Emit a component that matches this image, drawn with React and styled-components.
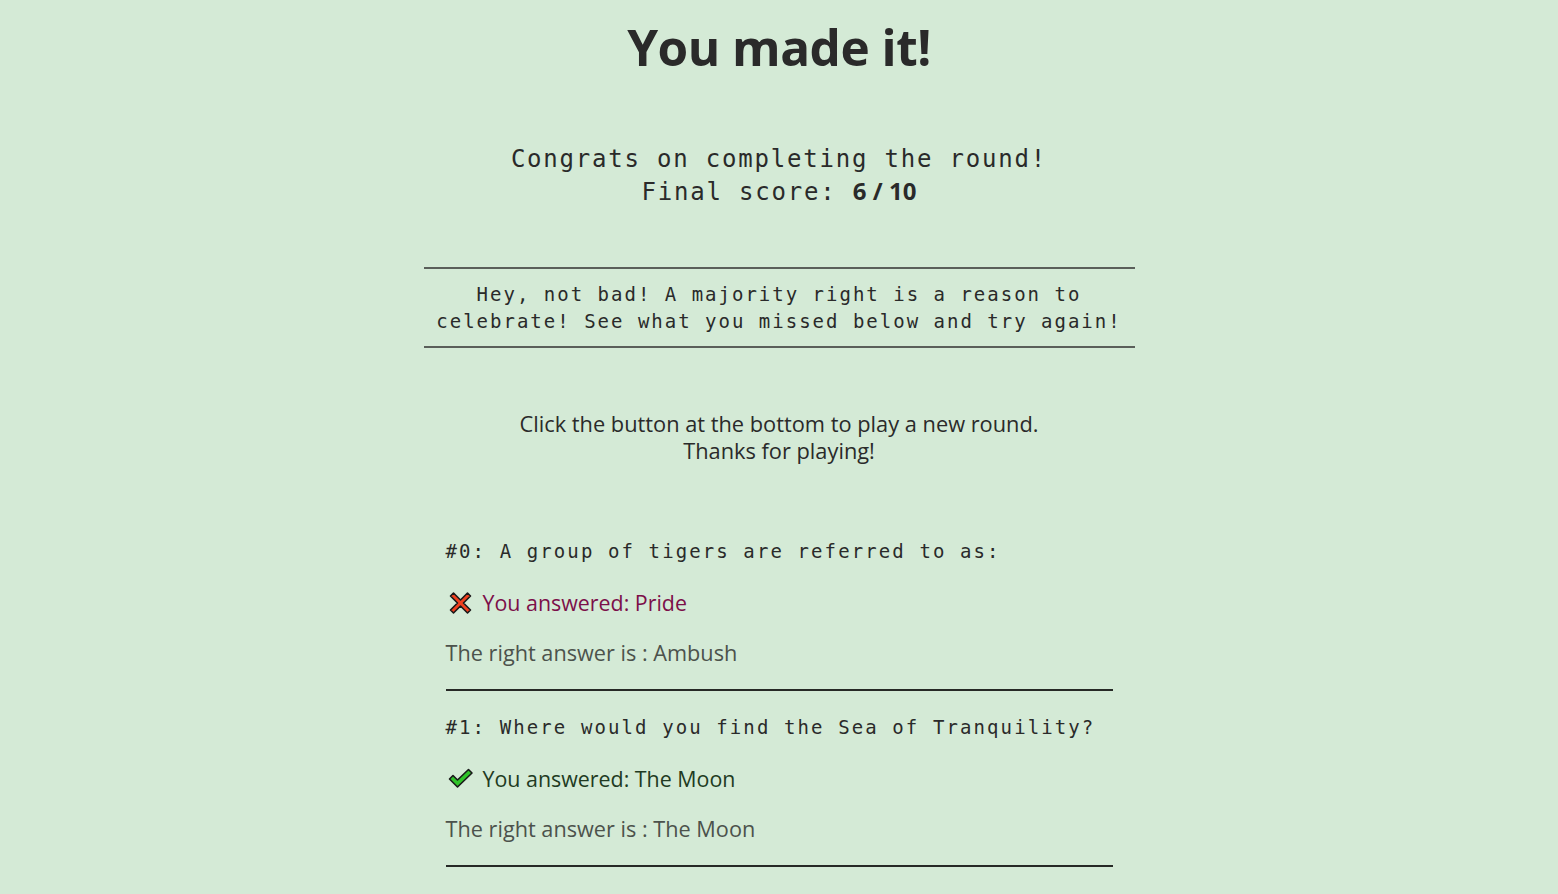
import styled, { createGlobalStyle } from 'styled-components';

const GlobalStyle = createGlobalStyle`
  body {
    margin: 0;
    background: #d4ead6;
    color: #2a2a2a;
    font-family: 'Open Sans', sans-serif;
  }
`;

const Page = styled.main`
  max-width: 711px;
  margin: 0 auto;
  padding-bottom: 40px;
  text-align: center;
`;

const Title = styled.h1`
  margin: 14px 0 0;
  font-size: 49.5px;
  line-height: 66px;
  font-weight: 700;
  letter-spacing: -0.5px;
`;

const Congrats = styled.p`
  margin: 63px 0 0;
  font-family: 'DejaVu Sans Mono', monospace;
  font-size: 24px;
  line-height: 32px;
  letter-spacing: 1.8px;

  strong {
    font-family: 'Open Sans', sans-serif;
    font-weight: 700;
    letter-spacing: 0;
  }
`;

const Message = styled.div`
  margin-top: 59px;
  padding: 12px 8px 11px;
  border-top: 2px solid #5a5f5a;
  border-bottom: 2px solid #5a5f5a;
  font-family: 'DejaVu Sans Mono', monospace;
  font-size: 19px;
  line-height: 27px;
  letter-spacing: 2px;
`;

const Info = styled.p`
  margin: 62px 0 0;
  font-size: 21.8px;
  line-height: 27px;
`;

const List = styled.ol`
  list-style: none;
  margin: 71px 22px 0;
  padding: 0;
  text-align: left;
`;

const Item = styled.li`
  padding: 20px 0;
  border-bottom: 2px solid #262926;

  &:first-child {
    padding-top: 0;
  }
`;

const Question = styled.h3`
  margin: 0;
  font-family: 'DejaVu Sans Mono', monospace;
  font-size: 19px;
  font-weight: 400;
  line-height: 32px;
  letter-spacing: 2.1px;
`;

const Answer = styled.p`
  display: flex;
  align-items: center;
  gap: 8px;
  margin: 20px 0 0;
  font-size: 21.4px;
  line-height: 32px;
  color: ${(p) => (p.$correct ? '#213a22' : '#7c0f49')};
`;

const RightAnswer = styled.p`
  margin: 18px 0 0;
  font-size: 21.7px;
  line-height: 32px;
  color: #4c524c;
`;

const CrossIcon = () => (
  <svg width="29" height="28" viewBox="0 0 28 28">
    <path
      d="M4 7 L7 4 L14 11 L21 4 L24 7 L17 14 L24 21 L21 24 L14 17 L7 24 L4 21 L11 14 Z"
      fill="#f0401f"
      stroke="#1a1a1a"
      strokeWidth="1.6"
      strokeLinejoin="round"
    />
  </svg>
);

const CheckIcon = () => (
  <svg width="29" height="28" viewBox="0 0 28 28">
    <path
      d="M3 14 L6.5 10.5 L11 15 L22 4.5 L25.5 8 L11 22 Z"
      fill="#2fc42a"
      stroke="#1a1a1a"
      strokeWidth="1.6"
      strokeLinejoin="round"
    />
  </svg>
);

const questions = [
  {
    q: 'A group of tigers are referred to as:',
    answered: 'Pride',
    right: 'Ambush',
  },
  {
    q: 'Where would you find the Sea of Tranquility?',
    answered: 'The Moon',
    right: 'The Moon',
  },
  {
    q: 'What is the capital of Australia?',
    answered: 'Canberra',
    right: 'Canberra',
  },
];

const App = () => {
  return (
    <>
      <GlobalStyle />
      <Page>
        <Title>You made it!</Title>
        <Congrats>
          Congrats on completing the round!
          <br />
          Final score: <strong>6 / 10</strong>
        </Congrats>
        <Message>
          Hey, not bad! A majority right is a reason to celebrate! See what you
          missed below and try again!
        </Message>
        <Info>
          Click the button at the bottom to play a new round.
          <br />
          Thanks for playing!
        </Info>
        <List>
          {questions.map((item, i) => {
            const correct = item.answered === item.right;
            return (
              <Item key={i}>
                <Question>
                  #{i}: {item.q}
                </Question>
                <Answer $correct={correct}>
                  {correct ? <CheckIcon /> : <CrossIcon />}
                  You answered: {item.answered}
                </Answer>
                <RightAnswer>The right answer is : {item.right}</RightAnswer>
              </Item>
            );
          })}
        </List>
      </Page>
    </>
  );
};

export default App;
